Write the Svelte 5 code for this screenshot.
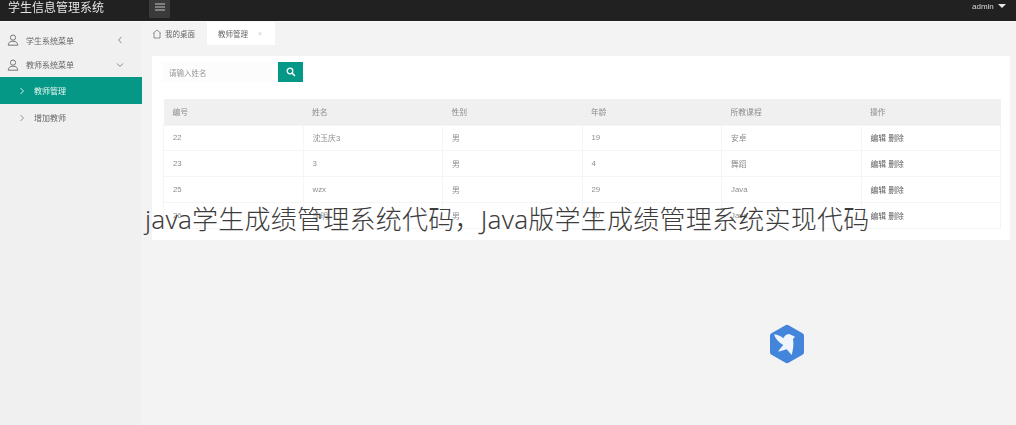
<script>
  const columns = ['编号', '姓名', '性别', '年龄', '所教课程', '操作'];
  const rows = [
    ['22', '沈玉庆3', '男', '19', '安卓'],
    ['23', '3', '男', '4', '舞蹈'],
    ['25', 'wzx', '男', '29', 'Java'],
    ['26', '李明', '男', '30', 'Java']
  ];
</script>

<div class="page">
  <div class="shot">
    <header class="topbar">
      <div class="brand">学生信息管理系统</div>
      <button class="toggle" aria-label="菜单">
        <svg width="10" height="8" viewBox="0 0 10 8"><path d="M0 1h10M0 4h10M0 7h10" stroke="#c4c4c4" stroke-width="1.2" fill="none" /></svg>
      </button>
      <div class="user">admin <span class="caret"></span></div>
    </header>
    <div class="body">
      <aside class="side">
        <div class="group">
          <svg class="person" viewBox="0 0 12 12"><circle cx="6" cy="3.6" r="2.6" /><path d="M1.2 11.2c.3-2.6 1.6-4 4.8-4s4.5 1.4 4.8 4z" /></svg>
          <span>学生系统菜单</span>
          <svg class="chev" viewBox="0 0 8 8"><path d="M5.5 1 2.5 4l3 3" /></svg>
        </div>
        <div class="group">
          <svg class="person" viewBox="0 0 12 12"><circle cx="6" cy="3.6" r="2.6" /><path d="M1.2 11.2c.3-2.6 1.6-4 4.8-4s4.5 1.4 4.8 4z" /></svg>
          <span>教师系统菜单</span>
          <svg class="chev" viewBox="0 0 8 8"><path d="M1 2.5l3 3 3-3" /></svg>
        </div>
        <div class="item active">
          <svg class="mini" viewBox="0 0 6 8"><path d="M1.5 1l3 3-3 3" /></svg>
          <span>教师管理</span>
        </div>
        <div class="item">
          <svg class="mini" viewBox="0 0 6 8"><path d="M1.5 1l3 3-3 3" /></svg>
          <span>增加教师</span>
        </div>
      </aside>
      <main class="main">
        <nav class="tabs">
          <div class="tab">
            <svg class="home" viewBox="0 0 10 10"><path d="M1 4.5 5 1l4 3.5M2 4v5h6V4" /></svg>
            <span>我的桌面</span>
          </div>
          <div class="tab current"><span>教师管理</span><span class="close">×</span></div>
        </nav>
        <section class="card">
          <div class="search">
            <div class="input">请输入姓名</div>
            <button class="go" aria-label="搜索">
              <svg width="10" height="10" viewBox="0 0 10 10"><circle cx="4" cy="4" r="2.8" fill="none" stroke="#fff" stroke-width="1.3" /><path d="M6 6l3 3" stroke="#fff" stroke-width="1.5" /></svg>
            </button>
          </div>
          <table>
            <thead>
              <tr>{#each columns as c}<th>{c}</th>{/each}</tr>
            </thead>
            <tbody>
              {#each rows as r}
                <tr>
                  {#each r as v}<td>{v}</td>{/each}
                  <td class="ops">编辑 删除</td>
                </tr>
              {/each}
            </tbody>
          </table>
        </section>
      </main>
    </div>
  </div>

  <div class="caption">java学生成绩管理系统代码，Java版学生成绩管理系统实现代码</div>

  <svg class="logo" viewBox="0 0 36 40" aria-hidden="true">
    <path d="M16.5 1.2a3 3 0 0 1 3 0L33.5 9.2a3 3 0 0 1 1.5 2.6v16.4a3 3 0 0 1-1.5 2.6L19.5 38.8a3 3 0 0 1-3 0L2.5 30.8a3 3 0 0 1-1.5-2.6V11.8a3 3 0 0 1 1.5-2.6z" fill="#4485dc" />
    <path d="M5 10.3C9 11 12 12 14.3 14.3 15.5 11.500 18 10 20.3 10L26 12.7 24 15c1 6 0 11-1.3 16l-5-5.700-8.400 2.400c1.700-3.200 3.200-4.700 5-6.700C10 19 6.500 15 5 10.300z" fill="#f0f5fc" />
  </svg>
</div>

<style>
  :global(body) {
    margin: 0;
    background: #f3f3f3;
  }

  .page {
    position: relative;
    width: 1016px;
    height: 425px;
    overflow: hidden;
    font-family: "Liberation Sans", "Noto Sans CJK SC", sans-serif;
  }

  .shot {
    display: flex;
    flex-direction: column;
    height: 100%;
    filter: blur(0.7px);
    color: #555;
  }

  .topbar {
    display: flex;
    align-items: center;
    height: 21px;
    flex: none;
    background: #212121;
    border-bottom: 1px solid #f8f8f8;
    overflow: hidden;
  }

  .brand {
    width: 149px;
    padding-left: 8px;
    box-sizing: border-box;
    margin-top: -9px;
    font-size: 12px;
    color: #e4e4e4;
  }

  .toggle {
    display: flex;
    align-items: center;
    justify-content: center;
    width: 21px;
    height: 18px;
    padding: 0 0 5px;
    box-sizing: border-box;
    align-self: flex-start;
    border: 0;
    background: #3a3a3a;
  }

  .user {
    margin-left: auto;
    margin-right: 10px;
    margin-top: -9px;
    font-size: 8px;
    color: #d8d8d8;
  }

  .caret {
    display: inline-block;
    margin-left: 2px;
    vertical-align: 1px;
    border-left: 4px solid transparent;
    border-right: 4px solid transparent;
    border-top: 4px solid #e8e8e8;
  }

  .body {
    display: flex;
    flex: 1;
  }

  .side {
    width: 142px;
    flex: none;
    padding-top: 6px;
    background: #f0f0f0;
    font-size: 8px;
    color: #666;
  }

  .group {
    display: flex;
    align-items: center;
    height: 24.5px;
    padding-left: 7px;
  }

  .group span {
    margin-left: 7px;
  }

  .person {
    width: 12px;
    height: 12px;
    fill: none;
    stroke: #777;
    stroke-width: 1;
  }

  .chev {
    width: 8px;
    height: 8px;
    margin-left: auto;
    margin-right: 18px;
    fill: none;
    stroke: #888;
    stroke-width: 1;
  }

  .item {
    display: flex;
    align-items: center;
    height: 27px;
    padding-left: 19px;
  }

  .item span {
    margin-left: 9px;
  }

  .item.active {
    background: #069886;
    color: #e6f5f2;
  }

  .mini {
    width: 6px;
    height: 8px;
    fill: none;
    stroke: #888;
    stroke-width: 0.9;
  }

  .active .mini {
    stroke: #e6f5f2;
  }

  .main {
    flex: 1;
    min-width: 0;
    padding: 0 6px 0 10px;
    background: #f3f3f3;
  }

  .tabs {
    display: flex;
    height: 23px;
    font-size: 7.5px;
  }

  .tab {
    display: flex;
    align-items: center;
    gap: 3px;
    padding-right: 5px;
    color: #666;
  }

  .tab.current {
    gap: 10px;
    padding: 0 13px 0 11px;
    margin-left: 7px;
    background: #fff;
  }

  .home {
    width: 10px;
    height: 10px;
    fill: none;
    stroke: #777;
    stroke-width: 0.8;
  }

  .close {
    color: #ccc;
  }

  .card {
    margin-top: 11px;
    padding: 6px 9px 11px 10px;
    height: 167px;
    background: #fff;
  }

  .search {
    display: flex;
    align-items: center;
    gap: 6px;
    margin-bottom: 17px;
  }

  .input {
    display: flex;
    align-items: center;
    width: 110px;
    height: 20px;
    padding-left: 7px;
    box-sizing: border-box;
    background: #fcfcfc;
    font-size: 7.5px;
    color: #999;
  }

  .go {
    display: flex;
    align-items: center;
    justify-content: center;
    width: 25px;
    height: 20px;
    padding: 0;
    border: 0;
    background: #069886;
  }

  table {
    width: 838px;
    margin-left: 1px;
    border-collapse: collapse;
    table-layout: fixed;
    font-size: 7.8px;
  }

  th,
  td {
    padding: 0 0 0 9px;
    box-sizing: border-box;
    text-align: left;
    font-weight: 400;
    color: #8c8c8c;
  }

  th {
    height: 26px;
    background: #f0f0f0;
  }

  td {
    height: 25.9px;
    border: 1px solid #f5f5f5;
  }

  .ops {
    color: #5c5c5c;
  }

  .caption {
    position: absolute;
    left: 145px;
    top: 200px;
    font-family: "Noto Sans", "Noto Sans CJK SC", sans-serif;
    font-size: 26px;
    font-weight: 300;
    letter-spacing: 0.24px;
    line-height: 38px;
    white-space: nowrap;
    color: #3c3c3c;
  }

  .logo {
    position: absolute;
    left: 769px;
    top: 324px;
    width: 36px;
    height: 40px;
    filter: blur(0.6px);
  }
</style>
